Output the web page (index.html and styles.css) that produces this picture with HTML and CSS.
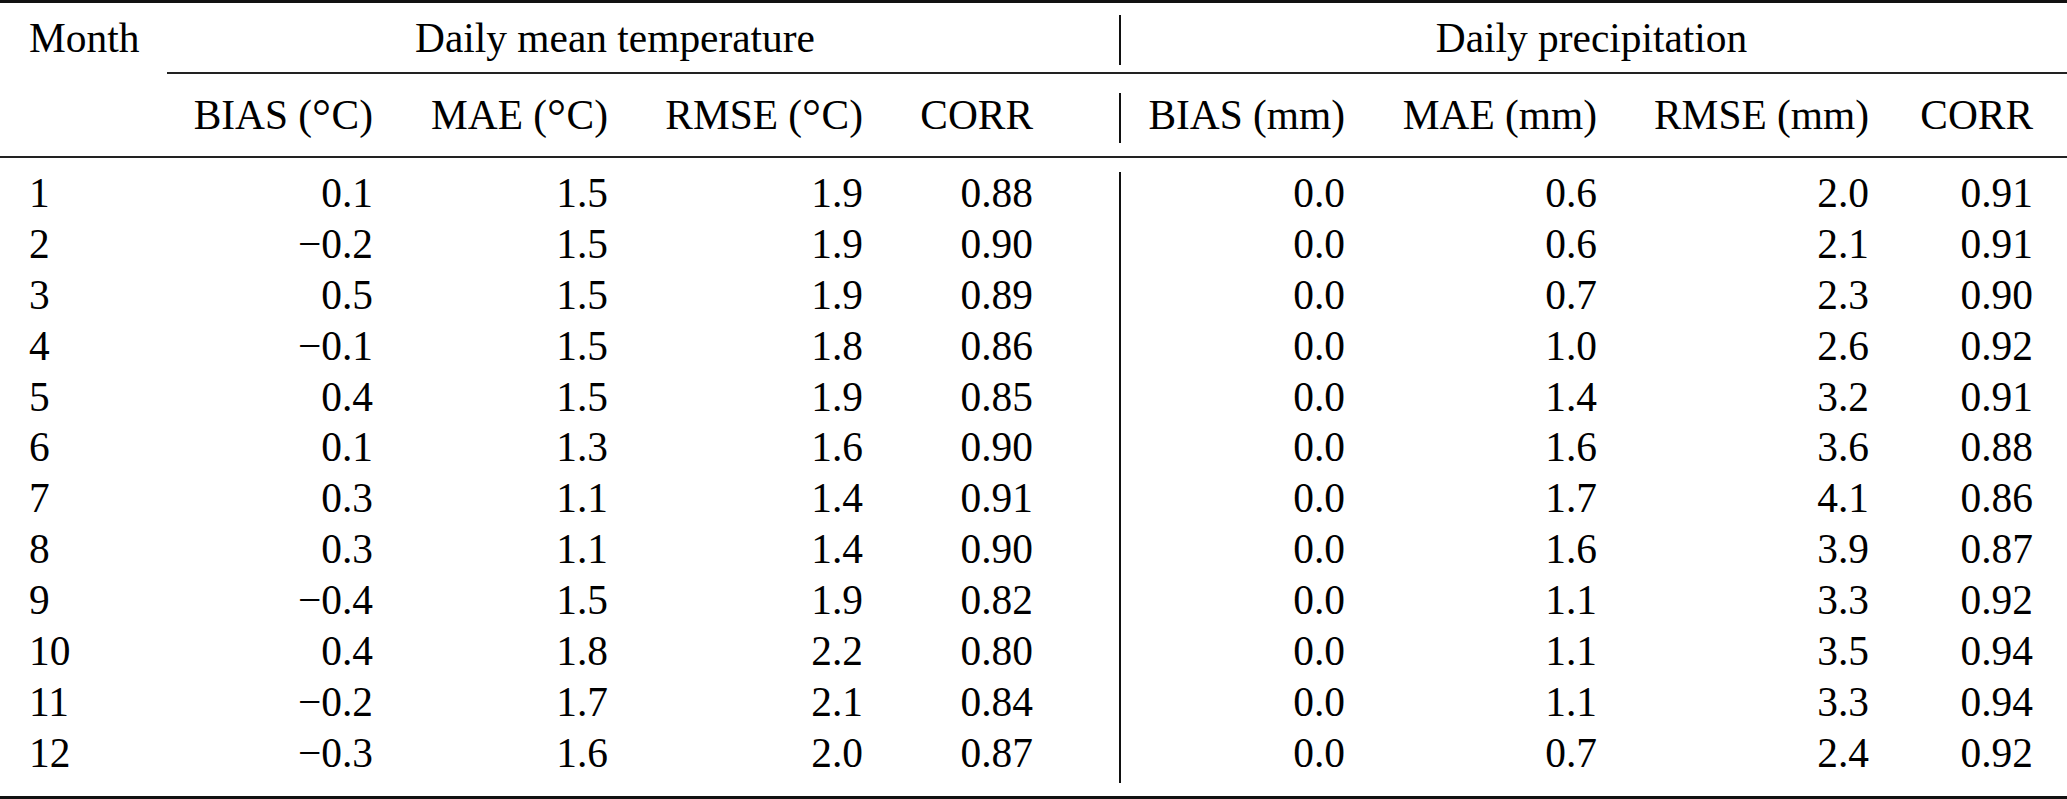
FILE: index.html
```html
<!DOCTYPE html>
<html lang="en">
<head>
<meta charset="utf-8">
<title>Monthly verification statistics</title>
<link rel="stylesheet" href="styles.css">
</head>
<body>
<div class="tbl">
  <div class="rule rule-top"></div>
  <div class="row row-h1">
    <div class="month">Month</div>
    <div class="grp grp-temp">Daily mean temperature</div>
    <div class="grp grp-prec">Daily precipitation</div>
  </div>
  <div class="rule rule-cmid"></div>
  <div class="row row-h2">
    <div class="month"></div>
    <div class="num">BIAS (<span class="deg">°</span>C)</div>
    <div class="num">MAE (<span class="deg">°</span>C)</div>
    <div class="num">RMSE (<span class="deg">°</span>C)</div>
    <div class="num">CORR</div>
    <div class="gap"></div>
    <div class="num sep">BIAS (mm)</div>
    <div class="num">MAE (mm)</div>
    <div class="num">RMSE (mm)</div>
    <div class="num">CORR</div>
  </div>
  <div class="rule rule-mid"></div>
  <div class="body">
    <div class="row row-d"><div class="month">1</div><div class="num">0.1</div><div class="num">1.5</div><div class="num">1.9</div><div class="num">0.88</div><div class="gap"></div><div class="num sep">0.0</div><div class="num">0.6</div><div class="num">2.0</div><div class="num">0.91</div></div>
    <div class="row row-d"><div class="month">2</div><div class="num">−0.2</div><div class="num">1.5</div><div class="num">1.9</div><div class="num">0.90</div><div class="gap"></div><div class="num sep">0.0</div><div class="num">0.6</div><div class="num">2.1</div><div class="num">0.91</div></div>
    <div class="row row-d"><div class="month">3</div><div class="num">0.5</div><div class="num">1.5</div><div class="num">1.9</div><div class="num">0.89</div><div class="gap"></div><div class="num sep">0.0</div><div class="num">0.7</div><div class="num">2.3</div><div class="num">0.90</div></div>
    <div class="row row-d"><div class="month">4</div><div class="num">−0.1</div><div class="num">1.5</div><div class="num">1.8</div><div class="num">0.86</div><div class="gap"></div><div class="num sep">0.0</div><div class="num">1.0</div><div class="num">2.6</div><div class="num">0.92</div></div>
    <div class="row row-d"><div class="month">5</div><div class="num">0.4</div><div class="num">1.5</div><div class="num">1.9</div><div class="num">0.85</div><div class="gap"></div><div class="num sep">0.0</div><div class="num">1.4</div><div class="num">3.2</div><div class="num">0.91</div></div>
    <div class="row row-d"><div class="month">6</div><div class="num">0.1</div><div class="num">1.3</div><div class="num">1.6</div><div class="num">0.90</div><div class="gap"></div><div class="num sep">0.0</div><div class="num">1.6</div><div class="num">3.6</div><div class="num">0.88</div></div>
    <div class="row row-d"><div class="month">7</div><div class="num">0.3</div><div class="num">1.1</div><div class="num">1.4</div><div class="num">0.91</div><div class="gap"></div><div class="num sep">0.0</div><div class="num">1.7</div><div class="num">4.1</div><div class="num">0.86</div></div>
    <div class="row row-d"><div class="month">8</div><div class="num">0.3</div><div class="num">1.1</div><div class="num">1.4</div><div class="num">0.90</div><div class="gap"></div><div class="num sep">0.0</div><div class="num">1.6</div><div class="num">3.9</div><div class="num">0.87</div></div>
    <div class="row row-d"><div class="month">9</div><div class="num">−0.4</div><div class="num">1.5</div><div class="num">1.9</div><div class="num">0.82</div><div class="gap"></div><div class="num sep">0.0</div><div class="num">1.1</div><div class="num">3.3</div><div class="num">0.92</div></div>
    <div class="row row-d"><div class="month">10</div><div class="num">0.4</div><div class="num">1.8</div><div class="num">2.2</div><div class="num">0.80</div><div class="gap"></div><div class="num sep">0.0</div><div class="num">1.1</div><div class="num">3.5</div><div class="num">0.94</div></div>
    <div class="row row-d"><div class="month">11</div><div class="num">−0.2</div><div class="num">1.7</div><div class="num">2.1</div><div class="num">0.84</div><div class="gap"></div><div class="num sep">0.0</div><div class="num">1.1</div><div class="num">3.3</div><div class="num">0.94</div></div>
    <div class="row row-d"><div class="month">12</div><div class="num">−0.3</div><div class="num">1.6</div><div class="num">2.0</div><div class="num">0.87</div><div class="gap"></div><div class="num sep">0.0</div><div class="num">0.7</div><div class="num">2.4</div><div class="num">0.92</div></div>
  </div>
  <div class="rule rule-bot"></div>
</div>
</body>
</html>
```
FILE: styles.css
```css
html, body {
  margin: 0;
  padding: 0;
  background: #ffffff;
}

.tbl {
  width: 2067px;
  font-family: "Liberation Serif", "Times New Roman", serif;
  font-size: 41.4px;
  color: #000;
}

.rule {
  background: #111;
}
.rule-top {
  height: 3px;
  margin-bottom: 12px;
}
.rule-cmid {
  height: 2px;
  margin: 7px 0 19px 167px;
  background: #222;
}
.rule-mid {
  height: 2px;
  margin: 13px 0 14px 0;
  background: #222;
}
.rule-bot {
  height: 3px;
  margin-top: 13.2px;
}

.row {
  display: grid;
  grid-template-columns: 167px 206px 235px 255px 170px 86px 226px 252px 272px 164px 34px;
  white-space: nowrap;
}

.row-h1 {
  height: 50px;
  line-height: 46px;
}
.row-h2 {
  height: 50px;
  line-height: 44px;
}
.row-d {
  height: 50.9px;
  line-height: 43.25px;
}

.month {
  padding-left: 29px;
}
.num {
  text-align: right;
}
.sep {
  border-left: 2px solid #111;
}

.deg {
  display: inline-block;
  margin-right: 0.07em;
  transform: scale(1.15);
  transform-origin: 0% 25%;
}

.grp {
  text-align: center;
}
.grp-temp {
  grid-column: 2 / 6;
  padding-left: 30px;
}
.grp-prec {
  grid-column: 7 / 11;
  padding-left: 29px;
  border-left: 2px solid #111;
}
```
